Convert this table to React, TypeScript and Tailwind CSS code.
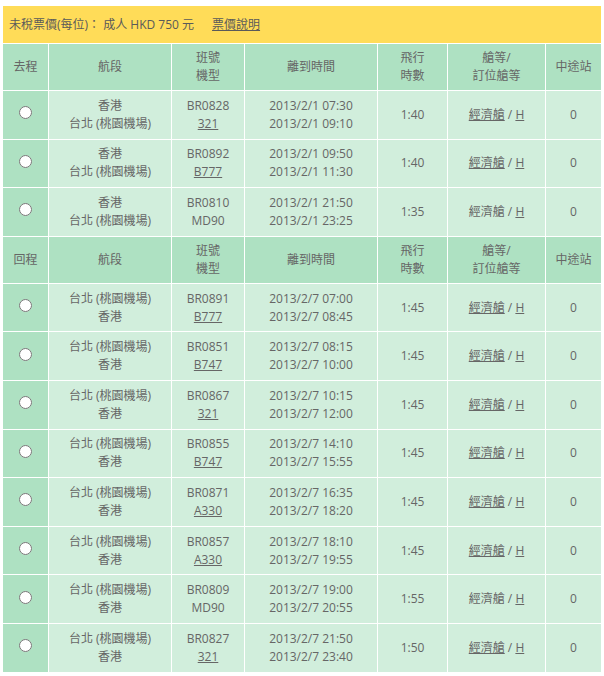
import React from "react";

type Row = {
  no: string;
  type: string;
  typeU: boolean;
  dep: string;
  arr: string;
  dur: string;
  clsU: boolean;
};

const outbound: Row[] = [
  { no: "BR0828", type: "321", typeU: true, dep: "2013/2/1 07:30", arr: "2013/2/1 09:10", dur: "1:40", clsU: true },
  { no: "BR0892", type: "B777", typeU: true, dep: "2013/2/1 09:50", arr: "2013/2/1 11:30", dur: "1:40", clsU: true },
  { no: "BR0810", type: "MD90", typeU: false, dep: "2013/2/1 21:50", arr: "2013/2/1 23:25", dur: "1:35", clsU: false },
];

const inbound: Row[] = [
  { no: "BR0891", type: "B777", typeU: true, dep: "2013/2/7 07:00", arr: "2013/2/7 08:45", dur: "1:45", clsU: true },
  { no: "BR0851", type: "B747", typeU: true, dep: "2013/2/7 08:15", arr: "2013/2/7 10:00", dur: "1:45", clsU: true },
  { no: "BR0867", type: "321", typeU: true, dep: "2013/2/7 10:15", arr: "2013/2/7 12:00", dur: "1:45", clsU: true },
  { no: "BR0855", type: "B747", typeU: true, dep: "2013/2/7 14:10", arr: "2013/2/7 15:55", dur: "1:45", clsU: true },
  { no: "BR0871", type: "A330", typeU: true, dep: "2013/2/7 16:35", arr: "2013/2/7 18:20", dur: "1:45", clsU: true },
  { no: "BR0857", type: "A330", typeU: true, dep: "2013/2/7 18:10", arr: "2013/2/7 19:55", dur: "1:45", clsU: true },
  { no: "BR0809", type: "MD90", typeU: false, dep: "2013/2/7 19:00", arr: "2013/2/7 20:55", dur: "1:55", clsU: false },
  { no: "BR0827", type: "321", typeU: true, dep: "2013/2/7 21:50", arr: "2013/2/7 23:40", dur: "1:50", clsU: true },
];

const headCell = "bg-[#aee1c2] h-[46px] flex flex-col items-center justify-center text-center";
const dataCell = "bg-[#d1eedc] h-[47.6px] flex flex-col items-center justify-center text-center";
const radioCell = "bg-[#aee1c2] h-[47.6px] flex items-center justify-center";

function Header({ label }: { label: string }) {
  return (
    <>
      <div className={headCell}>{label}</div>
      <div className={headCell}>航段</div>
      <div className={headCell}>
        <span>班號</span>
        <span>機型</span>
      </div>
      <div className={headCell}>離到時間</div>
      <div className={headCell}>
        <span>飛行</span>
        <span>時數</span>
      </div>
      <div className={headCell}>
        <span>艙等/</span>
        <span>訂位艙等</span>
      </div>
      <div className={headCell}>中途站</div>
    </>
  );
}

function DataRow({ r, name, from, to }: { r: Row; name: string; from: string; to: string }) {
  return (
    <>
      <div className={radioCell}>
        <input type="radio" name={name} className="w-[13px] h-[13px] m-0 mb-[4px]" />
      </div>
      <div className={dataCell}>
        <span>{from}</span>
        <span>{to}</span>
      </div>
      <div className={dataCell}>
        <span>{r.no}</span>
        <span className={r.typeU ? "underline" : ""}>{r.type}</span>
      </div>
      <div className={dataCell}>
        <span>{r.dep}</span>
        <span>{r.arr}</span>
      </div>
      <div className={dataCell}>{r.dur}</div>
      <div className={dataCell}>
        <span>
          <span className={r.clsU ? "underline" : ""}>經濟艙</span> / <span className="underline">H</span>
        </span>
      </div>
      <div className={dataCell}>0</div>
    </>
  );
}

export default function App() {
  return (
    <div
      className="bg-white w-[604px] h-[676px] pt-[6px] pl-[3px] text-[12px] leading-[18px] text-[#666666]"
      style={{ fontFamily: '"Open Sans", "Noto Sans CJK TC", sans-serif' }}
    >
      <div className="w-[598px]">
        <div className="bg-[#ffdc58] h-[37px] mb-px flex items-center pl-[6px] text-[#5a5a5a]">
          <span>未稅票價(每位)： 成人 HKD 750 元</span>
          <span className="underline ml-[18px]">票價說明</span>
        </div>
        <div className="grid grid-cols-[45px_122px_72px_132px_69px_97px_55px] gap-px bg-white">
          <Header label="去程" />
          {outbound.map((r) => (
            <DataRow key={r.no} r={r} name="go" from="香港" to="台北 (桃園機場)" />
          ))}
          <Header label="回程" />
          {inbound.map((r) => (
            <DataRow key={r.no} r={r} name="back" from="台北 (桃園機場)" to="香港" />
          ))}
        </div>
      </div>
    </div>
  );
}
